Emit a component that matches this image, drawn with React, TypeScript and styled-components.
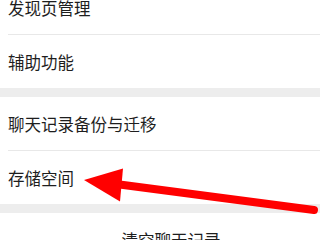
import styled, { createGlobalStyle } from "styled-components";

const GlobalStyle = createGlobalStyle`
  html, body {
    margin: 0;
    padding: 0;
    background: #ffffff;
  }
  body {
    font-family: "Noto Sans CJK SC", "Noto Sans", sans-serif;
    overflow: hidden;
  }
`;

const Screen = styled.div`
  position: relative;
  width: 320px;
  height: 240px;
  overflow: hidden;
  background: #ededed;
`;

const List = styled.div`
  display: flex;
  flex-direction: column;
  margin-top: -19px;
`;

const Group = styled.div`
  display: flex;
  flex-direction: column;
  background: #ffffff;
`;

const Gap = styled.div<{ $h: number }>`
  height: ${(p) => p.$h}px;
  background: #ededed;
`;

const Row = styled.div<{ $divider?: boolean }>`
  position: relative;
  height: 53px;
  display: flex;
  align-items: center;
  padding: 1px 0 0 8px;
  box-sizing: border-box;
  font-size: 16.5px;
  color: #1e1e1e;
  ${(p) =>
    p.$divider &&
    `
    &:after {
      content: "";
      position: absolute;
      left: 8px;
      right: 0;
      bottom: -1px;
      height: 1px;
      background: #e8e8e8;
    }
    margin-bottom: 1px;
  `}
`;

const DangerRow = styled.div`
  height: 54px;
  display: flex;
  align-items: center;
  justify-content: center;
  padding-left: 22px;
  background: #ffffff;
  font-size: 16.5px;
  color: #1e1e1e;
`;

const Arrow = styled.svg`
  position: absolute;
  left: 0;
  top: 0;
  pointer-events: none;
`;

const groups = [
  ["发现页管理", "辅助功能"],
  ["聊天记录备份与迁移", "存储空间"],
];

const App = () => {
  return (
    <>
      <GlobalStyle />
      <Screen>
        <List>
          {groups.map((items, gi) => (
            <div key={gi}>
              <Group>
                {items.map((label, i) => (
                  <Row key={label} $divider={i < items.length - 1}>
                    {label}
                  </Row>
                ))}
              </Group>
              <Gap $h={gi === 0 ? 9 : 9} />
            </div>
          ))}
          <DangerRow>清空聊天记录</DangerRow>
        </List>
        <Arrow width="320" height="240" viewBox="0 0 320 240">
          <line
            x1="112"
            y1="183.5"
            x2="314"
            y2="210"
            stroke="#ff0000"
            strokeWidth="8"
            strokeLinecap="round"
          />
          <polygon points="84,180 123,168.5 120,201.5" fill="#ff0000" />
        </Arrow>
      </Screen>
    </>
  );
};

export default App;
